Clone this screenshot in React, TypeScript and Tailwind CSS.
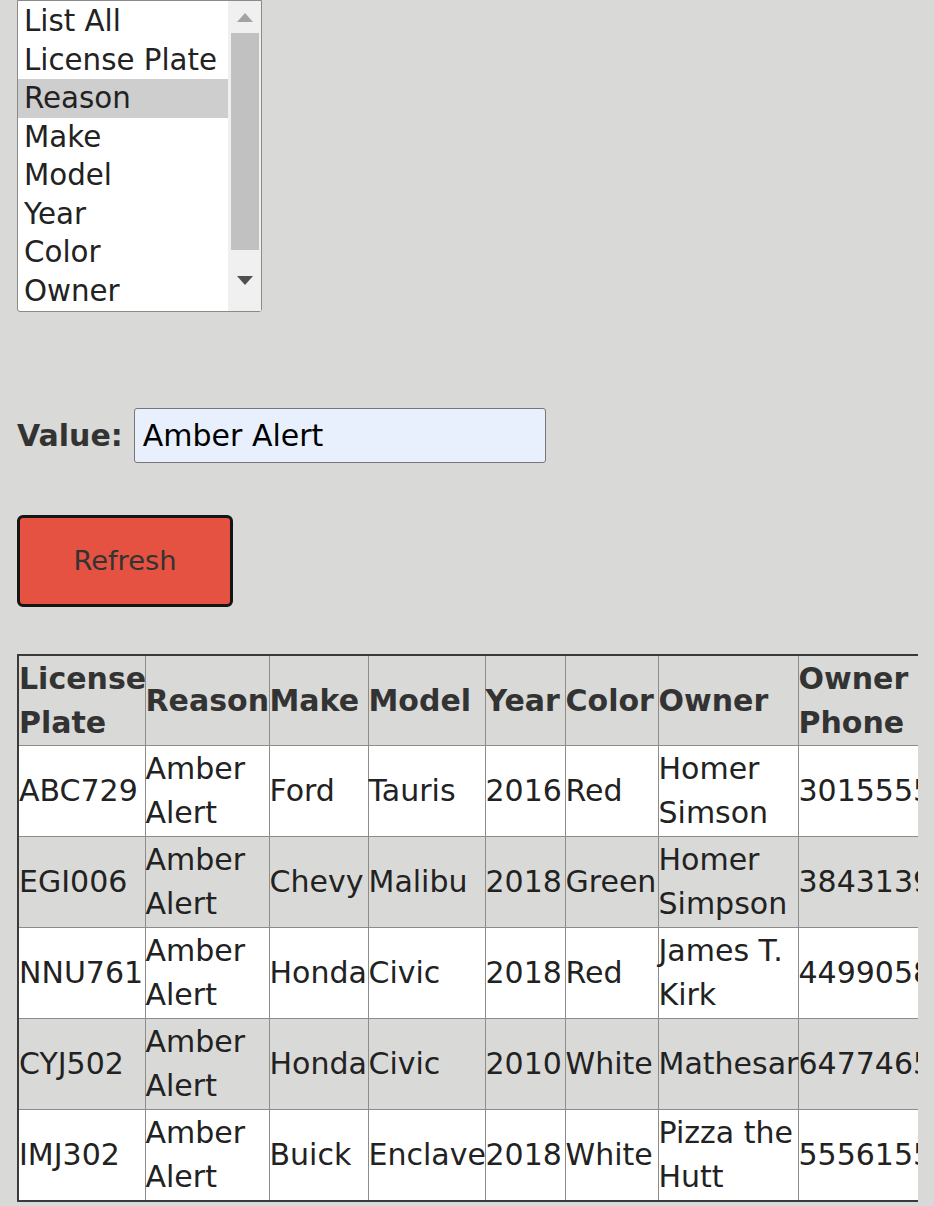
import React from "react";

const options = ["List All", "License Plate", "Reason", "Make", "Model", "Year", "Color", "Owner"];

const headers = ["License Plate", "Reason", "Make", "Model", "Year", "Color", "Owner", "Owner Phone"];

const rows = [
  ["ABC729", "Amber Alert", "Ford", "Tauris", "2016", "Red", "Homer Simson", "3015555555"],
  ["EGI006", "Amber Alert", "Chevy", "Malibu", "2018", "Green", "Homer Simpson", "3843139999"],
  ["NNU761", "Amber Alert", "Honda", "Civic", "2018", "Red", "James T. Kirk", "4499058888"],
  ["CYJ502", "Amber Alert", "Honda", "Civic", "2010", "White", "Mathesar", "6477465555"],
  ["IMJ302", "Amber Alert", "Buick", "Enclave", "2018", "White", "Pizza the Hutt", "5556155555"],
];

const colWidths = ["w-[127px]", "w-[124px]", "w-[99px]", "w-[117px]", "w-[80px]", "w-[93px]", "w-[140px]", "w-[180px]"];

export default function App() {
  return (
    <div className="min-h-screen bg-[#d9d9d7] font-['DejaVu_Sans',sans-serif] text-[#222]">
      <div className="pl-[17px]">
        {/* list box */}
        <div className="flex h-[312px] w-[245px] rounded-b-[3px] border border-[#8a8a8a] bg-white">
          <div className="flex-1 pt-[1px]">
            {options.map((o) => (
              <div
                key={o}
                className={`h-[38.5px] px-[6px] text-[29.3px] leading-[38.5px] whitespace-nowrap ${
                  o === "Reason" ? "bg-[#cecece]" : ""
                }`}
              >
                {o}
              </div>
            ))}
          </div>
          <div className="flex w-[33px] flex-col items-center bg-[#f0f0f0]">
            <div className="flex h-[32px] w-full items-center justify-center">
              <svg width="16" height="9" viewBox="0 0 16 9">
                <path d="M8 0L16 9H0Z" fill="#a3a3a3" />
              </svg>
            </div>
            <div className="h-[217px] w-[28px] bg-[#c1c1c1]" />
            <div className="flex flex-1 w-full items-center justify-center">
              <svg width="16" height="9" viewBox="0 0 16 9">
                <path d="M0 0H16L8 9Z" fill="#505050" />
              </svg>
            </div>
          </div>
        </div>

        {/* value field */}
        <div className="mt-[96px] flex items-center gap-[11px]">
          <label className="text-[30px] font-bold text-[#333]">Value:</label>
          <div className="flex h-[55px] w-[412px] items-center rounded-[3px] border border-[#767676] bg-[#e8f0fe] px-[8px] text-[30px] text-black">
            Amber Alert
          </div>
        </div>

        <button className="mt-[52px] flex h-[92px] w-[216px] items-center justify-center rounded-[6px] border-[3px] border-[#151515] bg-[#e55242] text-[27.3px] text-[#333]">
          Refresh
        </button>

        {/* results */}
        <div className="mt-[47px] w-[901px] overflow-hidden">
          <table className="w-[960px] table-fixed border-collapse border-2 border-[#3a3a3a] text-[30px] leading-[44px]">
            <colgroup>
              {colWidths.map((w, i) => (
                <col key={i} className={w} />
              ))}
            </colgroup>
            <thead>
              <tr className="bg-[#d9d9d7]">
                {headers.map((h) => (
                  <th key={h} className="border border-[#8c8c8c] px-0 pt-[1px] pb-0 text-left font-bold text-[#333]">
                    {h}
                  </th>
                ))}
              </tr>
            </thead>
            <tbody>
              {rows.map((r, i) => (
                <tr key={i} className={i % 2 === 0 ? "bg-white" : "bg-[#d9d9d7]"}>
                  {r.map((c, j) => (
                    <td key={j} className="border border-[#8c8c8c] px-0 py-[1px] align-middle">
                      {j === 7 ? <span className="whitespace-nowrap">{c}</span> : c}
                    </td>
                  ))}
                </tr>
              ))}
            </tbody>
          </table>
        </div>
      </div>
    </div>
  );
}
